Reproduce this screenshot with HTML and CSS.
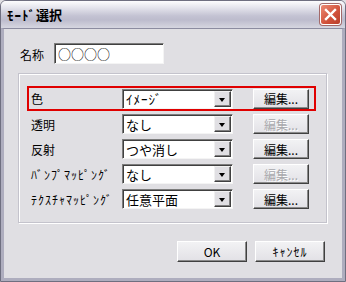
FILE: index.html
```html
<!DOCTYPE html>
<html lang="ja">
<head>
    <meta charset="UTF-8">
    <title>ﾓｰﾄﾞ選択</title>
    <link rel="stylesheet" href="styles.css">
</head>
<body>
    <div class="window">
        <div class="titlebar">
            <span class="title"><span class="hw">ﾓｰﾄﾞ</span>選択</span>
            <div class="close-btn">
                <svg width="13" height="13" viewBox="0 0 13 13">
                    <path d="M2 2 L11 11 M11 2 L2 11" stroke="#fff" stroke-width="2.4" stroke-linecap="square"/>
                </svg>
            </div>
        </div>

        <div class="content">
            <!-- Name -->
            <div class="name-row">
                <span class="name-label">名称</span>
                <div class="textbox">○○○○</div>
            </div>

            <!-- Material group -->
            <div class="group">
                <div class="row highlight">
                    <span class="row-label">色</span>
                    <div class="combo">
                        <span class="combo-text hw">ｲﾒｰｼﾞ</span>
                        <span class="combo-arrow"></span>
                    </div>
                    <div class="btn edit-btn">編集...</div>
                </div>
                <div class="row">
                    <span class="row-label">透明</span>
                    <div class="combo">
                        <span class="combo-text">なし</span>
                        <span class="combo-arrow"></span>
                    </div>
                    <div class="btn edit-btn disabled">編集...</div>
                </div>
                <div class="row">
                    <span class="row-label">反射</span>
                    <div class="combo">
                        <span class="combo-text">つや消し</span>
                        <span class="combo-arrow"></span>
                    </div>
                    <div class="btn edit-btn">編集...</div>
                </div>
                <div class="row">
                    <span class="row-label hw">ﾊﾞﾝﾌﾟﾏｯﾋﾟﾝｸﾞ</span>
                    <div class="combo">
                        <span class="combo-text">なし</span>
                        <span class="combo-arrow"></span>
                    </div>
                    <div class="btn edit-btn disabled">編集...</div>
                </div>
                <div class="row">
                    <span class="row-label hw">ﾃｸｽﾁｬﾏｯﾋﾟﾝｸﾞ</span>
                    <div class="combo">
                        <span class="combo-text">任意平面</span>
                        <span class="combo-arrow"></span>
                    </div>
                    <div class="btn edit-btn">編集...</div>
                </div>
            </div>

            <!-- Footer -->
            <div class="footer">
                <div class="btn dialog-btn">OK</div>
                <div class="btn dialog-btn hw">ｷｬﾝｾﾙ</div>
            </div>
        </div>
    </div>
</body>
</html>
```

FILE: styles.css
```css
* {
    margin: 0;
    padding: 0;
    box-sizing: border-box;
}

body {
    font-family: "Noto Sans CJK JP", "Liberation Sans", sans-serif;
    font-size: 12px;
    color: black;
    background: #e0dfe3;
}

/* half-width kana is drawn too tight by Noto, open it up */
.hw {
    letter-spacing: 1px;
}

.window {
    width: 346px;
    height: 282px;
    border: 1px solid #6f6f80;
    border-radius: 6px 6px 0 0;
    background: #e0dfe3;
    display: flex;
    flex-direction: column;
    overflow: hidden;
}

.titlebar {
    height: 27px;
    flex-shrink: 0;
    display: flex;
    align-items: center;
    justify-content: space-between;
    padding: 0 4px 0 6px;
    background: linear-gradient(#fdfdfe 0%, #e4e4ec 25%, #c4c3d3 55%, #bdbccd 70%, #d6d6e0 100%);
}

.title {
    font-weight: bold;
    font-size: 13px;
}

.close-btn {
    width: 21px;
    height: 21px;
    border: 1px solid #fff;
    border-radius: 3px;
    background: linear-gradient(135deg, #ec8a74, #d0503a 60%, #b83e2a);
    display: flex;
    align-items: center;
    justify-content: center;
    box-shadow: 0 0 0 1px #a36a6a;
}

.content {
    flex: 1;
    border-left: 3px solid #aeadbe;
    border-right: 3px solid #aeadbe;
    border-bottom: 3px solid #aeadbe;
    border-top: 1px solid #8c8ca0;
    padding: 13px 15px 0 14px;
    display: flex;
    flex-direction: column;
}

.name-row {
    display: flex;
    align-items: center;
    height: 22px;
    padding-left: 2px;
}

.name-label {
    width: 34px;
    padding-top: 3px;
}

.textbox {
    width: 110px;
    height: 21px;
    background: white;
    border: 1px solid;
    border-color: #7c7c7c #f4f4f4 #f4f4f4 #7c7c7c;
    box-shadow: inset 1px 1px 0 #404040;
    padding: 1px 3px;
    font-size: 13px;
    line-height: 18px;
}

.group {
    margin-top: 9px;
    height: 150px;
    border: 1px solid #c4c3cc;
    box-shadow: 1px 1px 0 #fff, inset 1px 1px 0 #fff;
    padding: 12px 10px 0 8px;
    display: flex;
    flex-direction: column;
    gap: 5px;
}

.row {
    display: flex;
    align-items: center;
    height: 20px;
    padding-left: 4px;
}

.row.highlight {
    height: 25px;
    border: 2px solid #e00000;
    padding-left: 2px;
    margin-bottom: -2px;
}

.row-label {
    width: 91px;
    font-size: 12px;
}

.combo {
    width: 111px;
    height: 20px;
    background: white;
    border: 1px solid;
    border-color: #7c7c7c #f4f4f4 #f4f4f4 #7c7c7c;
    box-shadow: inset 1px 1px 0 #404040;
    display: flex;
    align-items: center;
    justify-content: space-between;
    padding-left: 3px;
}

.combo-text {
    font-size: 13px;
    line-height: 18px;
    padding-top: 1px;
}

.combo-arrow {
    width: 17px;
    height: 16px;
    margin-right: 1px;
    background: #e0dfe3;
    border: 1px solid;
    border-color: #f0f0f0 #404040 #404040 #f0f0f0;
    box-shadow: inset -1px -1px 0 #808080;
    position: relative;
}

.combo-arrow::after {
    content: "";
    position: absolute;
    left: 4px;
    top: 6px;
    border-left: 3.5px solid transparent;
    border-right: 3.5px solid transparent;
    border-top: 4px solid black;
}

.btn {
    background: linear-gradient(#f2f2f4, #e2e1e6);
    border: 1px solid;
    border-color: #ffffff #404040 #404040 #ffffff;
    box-shadow: inset -1px -1px 0 #8a8a8a;
    display: flex;
    align-items: center;
    justify-content: center;
    font-size: 12px;
}

.edit-btn {
    width: 56px;
    height: 20px;
    margin-left: 20px;
}

.edit-btn.disabled {
    color: #a8a8ac;
    text-shadow: 1px 1px 0 #fff;
}

.footer {
    display: flex;
    justify-content: flex-end;
    gap: 8px;
    margin-top: 18px;
    padding-right: 2px;
}

.dialog-btn {
    width: 70px;
    height: 21px;
}
```
